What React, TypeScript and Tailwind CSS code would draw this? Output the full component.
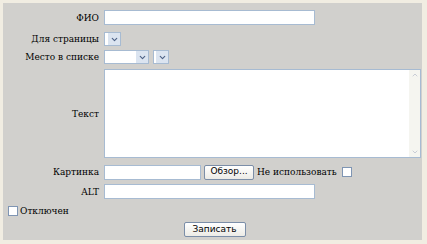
import { ChevronDown, ChevronUp } from 'lucide-react'

const serif = "font-['DejaVu_Serif_Condensed','DejaVu_Serif',serif] text-[10px] leading-none text-black"
const label = `w-[96px] shrink-0 text-right ${serif}`

function Select({ width }: { width: string }) {
  return (
    <div className={`flex h-[14px] ${width} items-stretch border border-[#a7bbd2] bg-white`}>
      <div className="flex-1" />
      <div className="flex w-[12px] items-center justify-center bg-[#dbe4f0]">
        <ChevronDown className="h-[9px] w-[9px] text-[#4d6185]" strokeWidth={3} />
      </div>
    </div>
  )
}

function Check() {
  return <div className="h-[10px] w-[10px] border border-[#7f95b3] bg-white" />
}

export default function App() {
  return (
    <div className="h-[244px] w-[427px] bg-[#f1ede2] pb-[4px] pl-[3px] pr-[5px] pt-[3px]">
      <div className="flex h-full flex-col bg-[#d1d0cd] pt-[7px]">
        {/* ФИО */}
        <div className="flex h-[15px] items-center gap-[5px]">
          <span className={label}>ФИО</span>
          <div className="h-[15px] w-[211px] border border-[#a7bbd2] bg-white" />
        </div>

        {/* Для страницы */}
        <div className="mt-[7px] flex h-[14px] items-center gap-[5px]">
          <span className={label}>Для страницы</span>
          <Select width="w-[17px]" />
        </div>

        {/* Место в списке */}
        <div className="mt-[4px] flex h-[14px] items-center gap-[5px]">
          <span className={label}>Место в списке</span>
          <Select width="w-[45px]" />
          <div className="-ml-[1px]">
            <Select width="w-[16px]" />
          </div>
        </div>

        {/* Текст */}
        <div className="mt-[5px] flex h-[89px] items-center gap-[5px]">
          <span className={label}>Текст</span>
          <div className="flex h-full w-[317px] border border-[#a7bbd2] bg-white">
            <div className="flex-1" />
            <div className="flex w-[11px] flex-col items-center justify-between bg-[#f5f5f0] py-[1px]">
              <ChevronUp className="h-[8px] w-[8px] text-[#c9cdd6]" strokeWidth={3} />
              <ChevronDown className="h-[8px] w-[8px] text-[#c9cdd6]" strokeWidth={3} />
            </div>
          </div>
        </div>

        {/* Картинка */}
        <div className="mt-[6px] flex h-[16px] items-center gap-[5px]">
          <span className={label}>Картинка</span>
          <div className="h-[15px] w-[97px] border border-[#a7bbd2] bg-white" />
          <button className="-ml-[2px] flex h-[15px] w-[50px] items-center justify-center rounded-[2px] border border-[#7b8ea8] bg-gradient-to-b from-white to-[#ecebe6] font-['DejaVu_Sans'] text-[9px] text-black">
            Обзор...
          </button>
          <span className={`-ml-[2px] ${serif}`}>Не использовать</span>
          <Check />
        </div>

        {/* ALT */}
        <div className="mt-[4px] flex h-[15px] items-center gap-[5px]">
          <span className={label}>ALT</span>
          <div className="h-[15px] w-[211px] border border-[#a7bbd2] bg-white" />
        </div>

        {/* Отключен */}
        <div className="mt-[5px] flex h-[14px] items-center gap-[2px] pl-[5px]">
          <Check />
          <span className={serif}>Отключен</span>
        </div>

        <div className="mt-[4px] flex justify-center">
          <button className="ml-[4px] flex h-[15px] w-[62px] items-center justify-center rounded-[2px] border border-[#7b8ea8] bg-gradient-to-b from-white to-[#ecebe6] font-['DejaVu_Sans'] text-[9px] text-black">
            Записать
          </button>
        </div>
      </div>
    </div>
  )
}
